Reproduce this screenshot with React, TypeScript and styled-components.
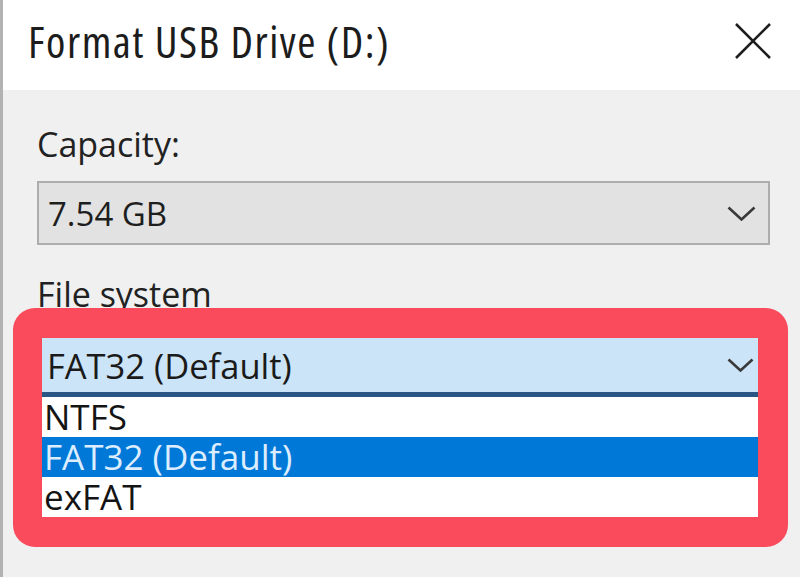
import React from "react";
import styled, { createGlobalStyle } from "styled-components";

const Global = createGlobalStyle`
  html, body { margin: 0; padding: 0; background: #f0f0f0; }
  body { font-family: "Open Sans", "Noto Sans", sans-serif; color: #1e1e1e; }
  #root { width: 800px; height: 577px; overflow: hidden; }
`;

const Window = styled.div`
  width: 800px;
  height: 577px;
  box-sizing: border-box;
  border-left: 3px solid #b2b2b2;
  background: #f0f0f0;
  display: flex;
  flex-direction: column;
  overflow: hidden;
`;

const TitleBar = styled.div`
  height: 90px;
  flex: none;
  box-sizing: border-box;
  background: #ffffff;
  display: flex;
  align-items: center;
  justify-content: space-between;
  padding: 0 28px 8px 25px;
`;

const Title = styled.div`
  font-size: 44px;
  line-height: 40px;
  font-stretch: 87.5%;
  letter-spacing: 1.5px;
  color: #1c1c1c;
  white-space: nowrap;
`;

const Body = styled.div`
  display: flex;
  flex-direction: column;
  padding: 37px 30px 0 34px;
`;

const Label = styled.div<{ $gap?: number }>`
  font-size: 34px;
  line-height: 35px;
  color: #222;
  margin-top: ${(p) => p.$gap ?? 0}px;
`;

const Combo = styled.div`
  height: 64px;
  margin-top: 19px;
  box-sizing: border-box;
  border: 2px solid #adadad;
  background: #e2e2e2;
  display: flex;
  align-items: center;
  justify-content: space-between;
  padding: 0 12px 0 9px;
  font-size: 33px;
  color: #1e1e1e;
`;

const Highlight = styled.div`
  position: relative;
  margin: -4px -18px 0 -24px;
  padding: 30px 30px 30px 29px;
  background: #f94b5c;
  border-radius: 22px;
`;

const OpenCombo = styled.div`
  height: 59px;
  box-sizing: border-box;
  background: #cce4f7;
  border-bottom: 5px solid #295684;
  display: flex;
  align-items: center;
  justify-content: space-between;
  padding: 0 4px 0 5px;
  font-size: 34.5px;
  color: #1a1a1a;
`;

const List = styled.div`
  background: #ffffff;
  display: flex;
  flex-direction: column;
`;

const Item = styled.div<{ $selected?: boolean }>`
  height: 40px;
  line-height: 40px;
  display: flex;
  align-items: center;
  padding-left: 2px;
  font-size: 35px;
  background: ${(p) => (p.$selected ? "#0078d7" : "transparent")};
  color: ${(p) => (p.$selected ? "#dcedff" : "#141414")};
`;

const Chevron = ({ w, h }: { w: number; h: number }) => (
  <svg width={w} height={h} viewBox={`0 0 ${w} ${h}`} fill="none">
    <polyline
      points={`1.5,1.5 ${w / 2},${h - 1.5} ${w - 1.5},1.5`}
      stroke="#3a3a3a"
      strokeWidth="2.6"
    />
  </svg>
);

const CloseIcon = () => (
  <svg width="38" height="36" viewBox="0 0 38 36" fill="none">
    <path d="M2 1 L36 35 M36 1 L2 35" stroke="#1e1e1e" strokeWidth="2.6" />
  </svg>
);

export default function App() {
  return (
    <>
      <Global />
      <Window>
        <TitleBar>
          <Title>Format USB Drive (D:)</Title>
          <CloseIcon />
        </TitleBar>
        <Body>
          <Label>Capacity:</Label>
          <Combo>
            <span>7.54 GB</span>
            <Chevron w={29} h={15} />
          </Combo>
          <Label $gap={32}>File system</Label>
          <Highlight>
            <OpenCombo>
              <span>FAT32 (Default)</span>
              <Chevron w={27} h={14} />
            </OpenCombo>
            <List>
              <Item>NTFS</Item>
              <Item $selected>FAT32 (Default)</Item>
              <Item>exFAT</Item>
            </List>
          </Highlight>
        </Body>
      </Window>
    </>
  );
}
